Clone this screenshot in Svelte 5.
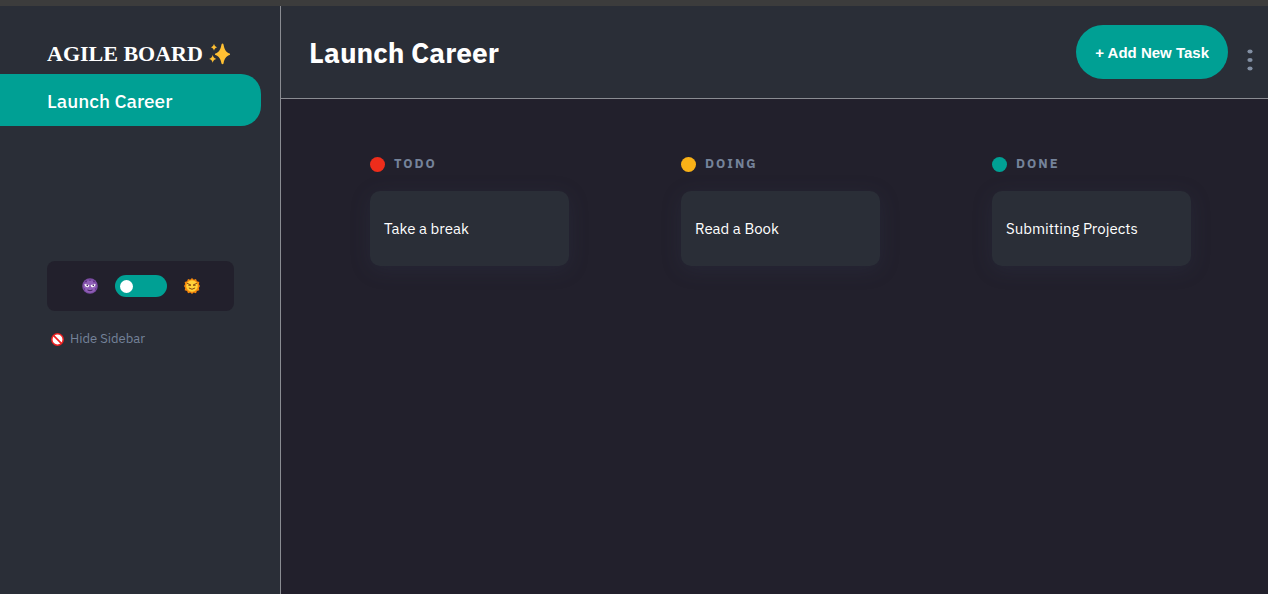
<script>
  let light = $state(false);
  const columns = [
    { name: 'TODO', color: '#ee2d1b', tasks: ['Take a break'] },
    { name: 'DOING', color: '#f9b117', tasks: ['Read a Book'] },
    { name: 'DONE', color: '#00a094', tasks: ['Submitting Projects'] }
  ];
</script>

<div class="app">
  <aside>
    <div class="logo">
      <span>AGILE BOARD</span>
      <svg width="22" height="22" viewBox="0 0 22 22" aria-hidden="true">
        <g fill="#ffc033">
          <path d="M13.500 .5c.5 0 .8.3 1 1 1 5.200 2.500 7.700 6 9 .8.3.8 1.200 0 1.500-3.500 1.300-5 3.800-6 8.500-.3 1.100-1.700 1.100-2 0-1-4.700-2.500-7.200-6-8.500-.8-.3-.8-1.200 0-1.500 3.500-1.300 5-3.800 6-9 .2-.7.500-1 1-1z"/>
          <path d="M5 .8c.7 2.200 1.200 2.800 3.200 3.500C6.200 5 5.700 5.600 5 7.800 4.300 5.600 3.800 5 1.800 4.300 3.800 3.600 4.300 3 5 .8z"/>
          <path d="M3.700 12c.7 2.500 1.300 3.200 3.600 3.900-2.300.7-2.900 1.400-3.600 3.900-.7-2.500-1.300-3.200-3.600-3.900 2.300-.7 2.900-1.400 3.600-3.900z"/>
        </g>
      </svg>
    </div>
    <nav><a class="board" href="#launch">Launch Career</a></nav>

    <div class="theme">
      <svg width="16" height="16" viewBox="0 0 16 16" aria-hidden="true">
        <circle cx="8" cy="8" r="7.800" fill="#7d4da5"/>
        <circle cx="8" cy="8.500" r="6.200" fill="#9160b8"/>
        <g fill="#613486"><circle cx="4" cy="3.500" r="1"/><circle cx="8" cy="2.200" r=".8"/><circle cx="12" cy="3.500" r="1"/><circle cx="2.500" cy="11" r=".8"/><circle cx="13.500" cy="11" r=".8"/></g>
        <path d="M2.500 6l4.800 1c0 3.200-4.300 3.300-4.800-1zM13.500 6L8.700 7c0 3.200 4.300 3.300 4.800-1z" fill="#fff"/>
        <path d="M5.500 12q2.500 1.500 5 0" fill="none" stroke="#43205e"/>
        <circle cx="5.300" cy="7.400" r=".8" fill="#43205e"/><circle cx="11.300" cy="7.400" r=".8" fill="#43205e"/>
      </svg>
      <label class="switch">
        <input type="checkbox" bind:checked={light} aria-label="Light theme" />
        <span class="knob"></span>
      </label>
      <svg width="16" height="16" viewBox="0 0 16 16" aria-hidden="true">
        <path d="M8 0l1.800 1.700L12 1l.9 2.200 2.400.8-.4 2.300L16 8l-1.200 1.900.5 2.300-2.400.7L12 15.200l-2.300-.7L8 16l-1.700-1.500-2.300.7-.9-2.300-2.400-.7.5-2.300L0 8l1.100-1.700L.7 4l2.400-.8L4 1l2.200.7z" fill="#f5870b"/>
        <circle cx="8" cy="8" r="5.800" fill="#ffd23a"/>
        <path d="M3.500 5.500l3 1.300M12.500 5.500l-3 1.300M4.800 7.300h1.700M9.500 7.300h1.700M5.200 10.200q2.800 2.400 5.600 0" fill="none" stroke="#854511" stroke-linecap="round"/>
      </svg>
    </div>

    <button class="hide" type="button">
      <svg width="13" height="13" viewBox="0 0 13 13" aria-hidden="true">
        <circle cx="6.500" cy="6.500" r="5.700" fill="#fff" stroke="#ee2020" stroke-width="1.500"/>
        <path d="M2.700 2.700l7.600 7.600" stroke="#ee2020" stroke-width="1.700"/>
      </svg>
      Hide Sidebar
    </button>
  </aside>

  <div class="content">
    <header>
      <h1>Launch Career</h1>
      <button class="add" type="button">+ Add New Task</button>
      <button class="more" type="button" aria-label="Board options">
        <svg width="6" height="22" viewBox="0 0 6 22" aria-hidden="true">
          <g fill="#828fa3"><ellipse cx="3" cy="2.500" rx="2.600" ry="2.100"/><ellipse cx="3" cy="11" rx="2.600" ry="2.100"/><ellipse cx="3" cy="19.500" rx="2.600" ry="2.100"/></g>
        </svg>
      </button>
    </header>
    <main>
      {#each columns as column}
        <section>
          <h2><span class="dot" style:background={column.color}></span>{column.name}</h2>
          {#each column.tasks as task}
            <article>{task}</article>
          {/each}
        </section>
      {/each}
    </main>
  </div>
</div>

<style>
  :global(body) { background: #22202c; }
  * { box-sizing: border-box; }
  .app {
    display: flex;
    min-height: 100vh;
    border-top: 6px solid #3c3c3c;
    background: #22202c;
    color: #fff;
    font-family: "IBM Plex Sans", "Noto Sans", sans-serif;
  }
  button { border: 0; background: none; padding: 0; cursor: pointer; }
  svg { display: block; flex: none; }
  aside {
    flex: none;
    width: 281px;
    padding-top: 28px;
    background: #2a2e37;
    border-right: 1px solid #8a8c92;
  }
  .logo {
    display: flex;
    align-items: center;
    gap: 6px;
    height: 40px;
    padding-left: 47px;
    font: bold 22px "Liberation Serif", serif;
  }
  .board {
    display: flex;
    align-items: center;
    height: 52px;
    margin-right: 19px;
    padding: 2px 0 0 47px;
    border-radius: 0 20px 20px 0;
    background: #00a094;
    color: #fff;
    font-size: 19px;
    font-weight: 500;
    text-decoration: none;
  }
  .theme {
    display: flex;
    align-items: center;
    justify-content: center;
    gap: 17px;
    height: 50px;
    margin: 135px 46px 0 47px;
    border-radius: 8px;
    background: #22202c;
  }
  .switch {
    display: flex;
    align-items: center;
    width: 52px;
    height: 22px;
    padding: 0 5px;
    border-radius: 11px;
    background: #00a094;
    cursor: pointer;
  }
  .switch input { appearance: none; width: 0; height: 0; margin: 0; }
  .switch:focus-within { outline: 1px solid #fff; }
  .knob { width: 13px; height: 13px; border-radius: 50%; background: #fff; transition: transform .2s; }
  input:checked + .knob { transform: translateX(28px); }
  .hide {
    display: flex;
    align-items: center;
    gap: 6px;
    margin: 18px 0 0 51px;
    color: #75839a;
    font: 13px/20px "IBM Plex Sans", "Noto Sans", sans-serif;
  }
  .content { flex: 1; min-width: 0; }
  header {
    display: flex;
    align-items: center;
    height: 93px;
    padding: 0 15px 0 28px;
    background: #2a2e37;
    border-bottom: 1px solid #8a8c92;
  }
  h1 { flex: 1; margin: 0; padding-top: 2px; font-size: 28px; line-height: 36px; font-weight: 700; }
  .add {
    height: 54px;
    padding: 0 19px;
    border-radius: 27px;
    background: #00a094;
    color: #fff;
    font: bold 15px "Liberation Sans", sans-serif;
  }
  .more { margin: 16px 0 0 19px; }
  main {
    display: grid;
    grid-template-columns: repeat(3, 1fr);
    gap: 112px;
    padding: 54px 77px 40px 89px;
  }
  h2 {
    display: flex;
    align-items: center;
    gap: 9px;
    margin: 0 0 16px;
    color: #75839a;
    font-size: 13px;
    line-height: 22px;
    font-weight: 700;
    letter-spacing: 2px;
  }
  .dot { width: 15px; height: 15px; border-radius: 50%; }
  article {
    padding: 25px 14px;
    border-radius: 10px;
    background: #2a2e37;
    box-shadow: 0 4px 20px rgba(54, 62, 90, .22);
    font-size: 15px;
    line-height: 25px;
  }
</style>
